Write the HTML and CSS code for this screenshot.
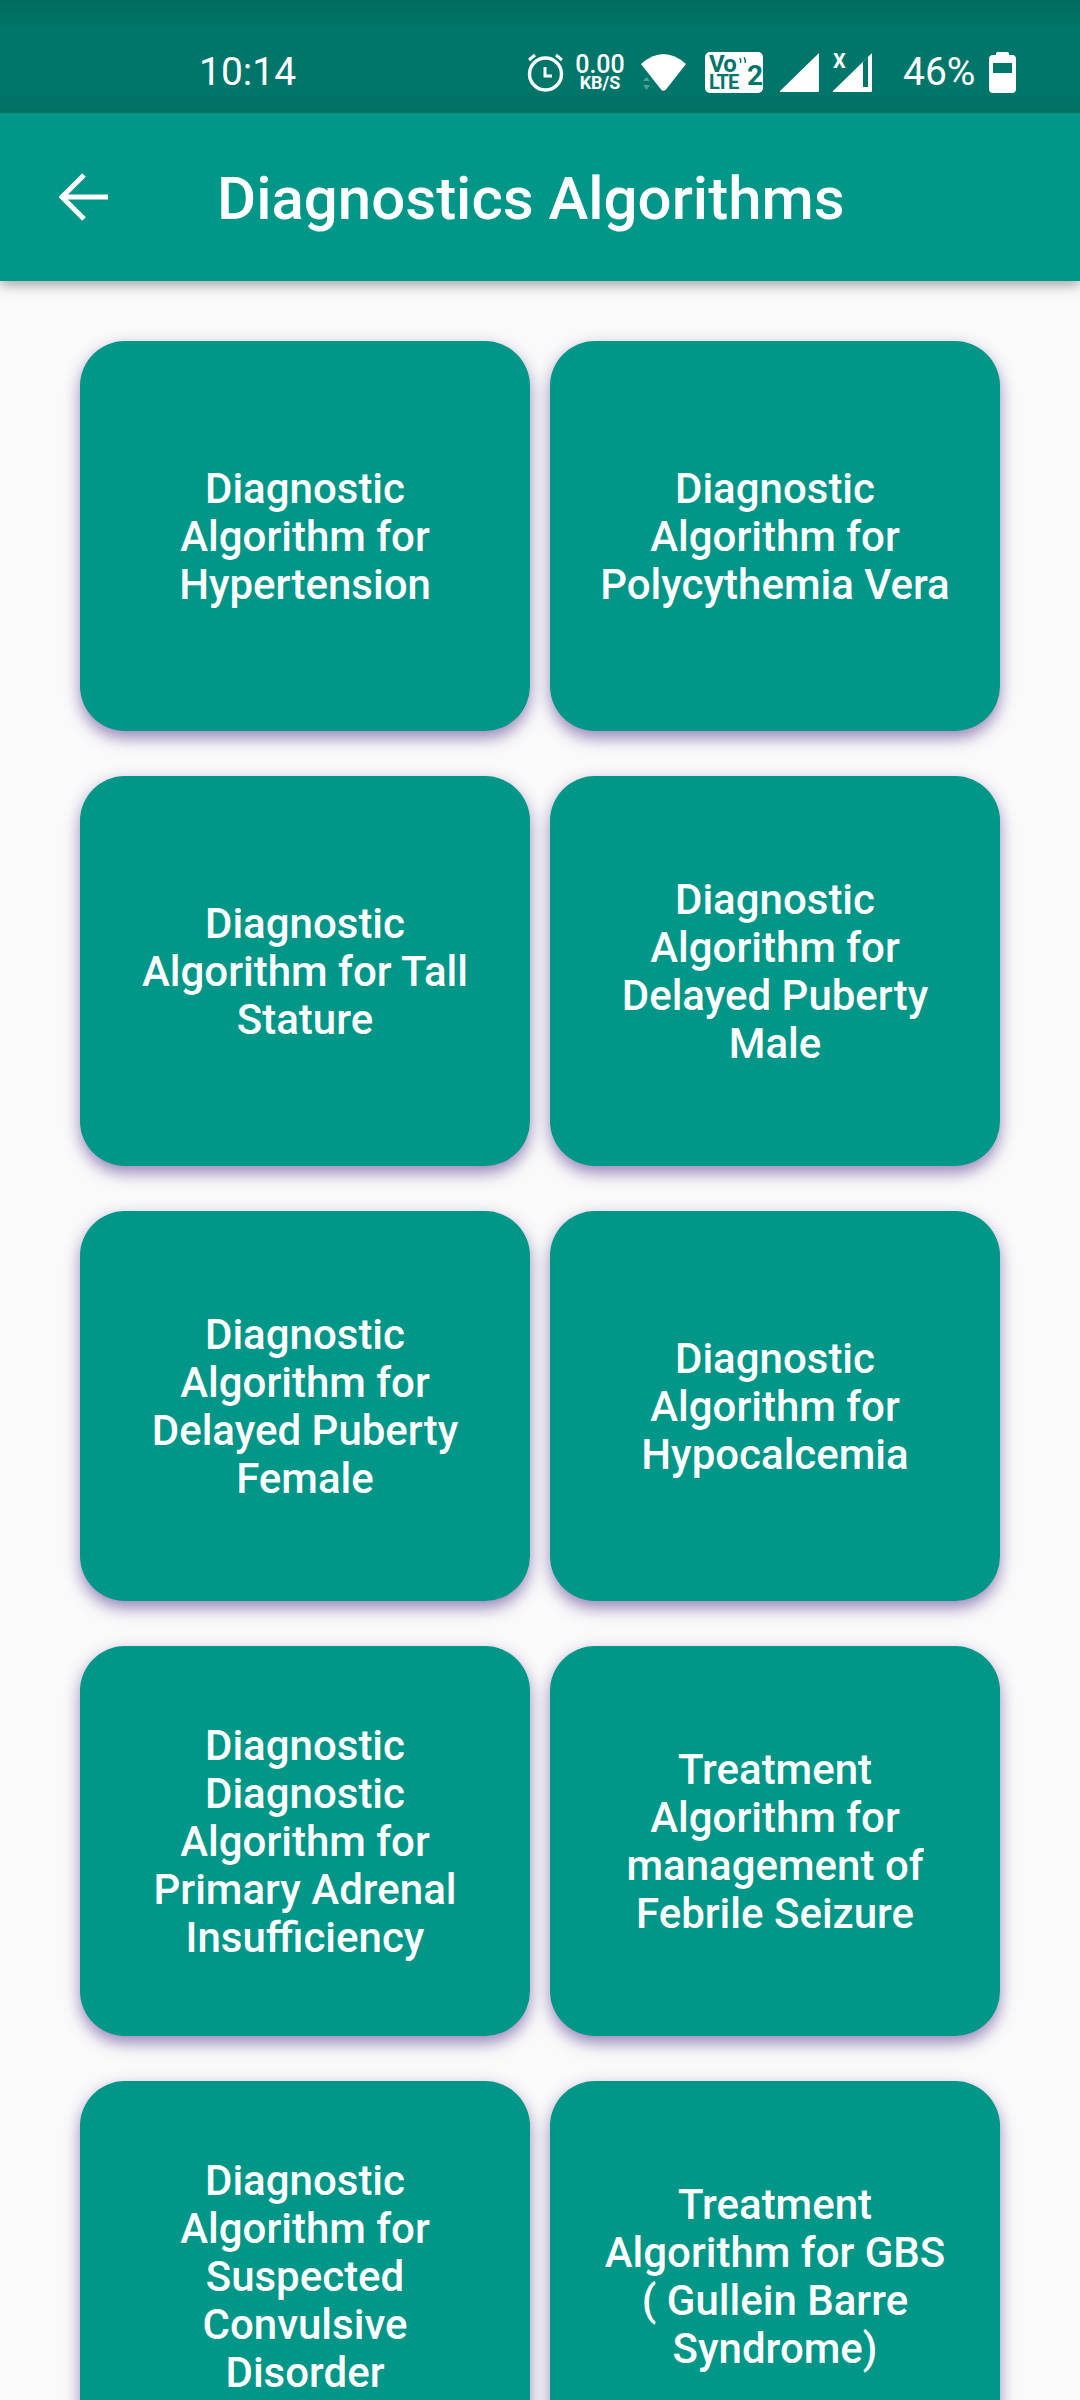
FILE: index.html
```html
<!DOCTYPE html>
<html lang="en">
<head>
<meta charset="utf-8">
<title>Diagnostics Algorithms</title>
<link rel="stylesheet" href="styles.css">
</head>
<body>
<div class="screen">
  <header class="top">
    <div class="status">
      <span class="time">10:14</span>
      <div class="status-icons">
        <svg class="i-alarm" width="37" height="39" viewBox="0 0 37 39"><circle cx="18.5" cy="21" r="16" fill="none" stroke="#fff" stroke-width="3.400"/><path d="M18 14v9h7" fill="none" stroke="#fff" stroke-width="3"/><path d="M2 7l6-5M35 7l-6-5" stroke="#fff" stroke-width="3"/></svg>
        <div class="speed"><span class="speed-n">0.00</span><span class="speed-u">KB/S</span></div>
        <svg class="i-wifi" width="45" height="37" viewBox="0 0 45 37"><path d="M0 10Q22.500 -10 45 10L25 35.500Q22.500 38 20 35.500Z" fill="#fff"/><path d="M2 27l3.500-4 3.500 4zM2 31l3.500 5 3.500-5z" fill="#fff" opacity=".3"/></svg>
        <div class="volte">
          <div class="volte-l">
            <div class="volte-vo"><span>Vo</span><svg class="volte-w" width="11" height="9" viewBox="0 0 11 9"><path d="M1 1q2.500 3 1 7M7 0q3 4 1.500 8" fill="none" stroke="#00766a" stroke-width="2"/></svg></div>
            <span class="volte-lte">LTE</span>
          </div>
          <span class="volte-n">2</span>
        </div>
        <svg class="i-sig1" width="40" height="40" viewBox="0 0 40 40"><path d="M40 1V38.500Q40 40 38.500 40H1.500Q0 40 1 39Z" fill="#fff"/></svg>
        <div class="sig2">
          <svg width="40" height="40" viewBox="0 0 40 40"><path d="M40 1V38.500Q40 40 38.500 40H1.500Q0 40 1 39ZM31 10 36 5V35H31Z" fill="#fff" fill-rule="evenodd"/></svg>
          <span class="sig-x">X</span>
        </div>
        <span class="batt-t">46%</span>
        <svg class="i-batt" width="27" height="41" viewBox="0 0 27 41"><path d="M7 3V1.500Q7 0 8.500 0H18.500Q20 0 20 1.500V3H23Q27 3 27 7V37Q27 41 23 41H4Q0 41 0 37V7Q0 3 4 3ZM4 11V21H23V11Z" fill="#fff" fill-rule="evenodd"/></svg>
      </div>
    </div>
    <div class="bar">
      <svg class="back" width="50" height="50" viewBox="0 0 50 50"><path d="M49 25H3M25 3 3 25l22 22" fill="none" stroke="#fff" stroke-width="5"/></svg>
      <h1 class="title">Diagnostics Algorithms</h1>
    </div>
  </header>
  <main class="grid">
    <a class="card">Diagnostic Algorithm for Hypertension</a>
    <a class="card">Diagnostic Algorithm for Polycythemia Vera</a>
    <a class="card">Diagnostic Algorithm for Tall Stature</a>
    <a class="card">Diagnostic Algorithm for Delayed Puberty Male</a>
    <a class="card">Diagnostic Algorithm for Delayed Puberty Female</a>
    <a class="card">Diagnostic Algorithm for Hypocalcemia</a>
    <a class="card">Diagnostic Diagnostic Algorithm for Primary Adrenal Insufficiency</a>
    <a class="card">Treatment Algorithm for management of Febrile Seizure</a>
    <a class="card">Diagnostic Algorithm for Suspected Convulsive Disorder</a>
    <a class="card">Treatment Algorithm for GBS ( Gullein Barre Syndrome)</a>
  </main>
</div>
</body>
</html>
```
FILE: styles.css
```css
html, body { margin: 0; padding: 0; }
body { width: 1080px; height: 2400px; overflow: hidden; font-family: Roboto, sans-serif; background: #fafafa; }
.screen { height: 2400px; overflow: hidden; }
.top { position: relative; z-index: 2; box-shadow: 0 4px 12px rgba(0,0,0,.35); }
.status { height: 113px; box-sizing: border-box; padding: 31px 0 0 199px; background: #00786b; background-image: linear-gradient(#006c60, #00766a 30%, #00766a 75%, #007064); display: flex; align-items: center; color: #fff; }
.time { font-size: 39px; width: 328px; flex: none; }
.status-icons { display: flex; align-items: center; }
.i-alarm { margin-right: 10px; flex: none; }
.speed { display: flex; flex-direction: column; align-items: center; width: 52px; margin-right: 15px; font-weight: 500; }
.speed-n { font-size: 25px; line-height: 21px; }
.speed-u { font-size: 18px; line-height: 15px; font-weight: 700; }
.i-wifi { margin-right: 19px; flex: none; }
.volte { width: 58px; height: 41px; background: #fff; border-radius: 5px; color: #00766a; display: flex; font-weight: 700; margin-right: 16px; box-sizing: border-box; padding: 2px 0 0 4px; }
.volte-l { display: flex; flex-direction: column; width: 38px; flex: none; }
.volte-vo { display: flex; font-size: 24px; line-height: 20px; letter-spacing: -.8px; }
.volte-w { margin: 2px 0 0 3px; }
.volte-lte { font-size: 20px; line-height: 17px; letter-spacing: -1px; }
.volte-n { font-size: 28px; line-height: 28px; margin-top: 8px; }
.i-sig1 { margin-right: 13px; flex: none; }
.sig2 { position: relative; width: 40px; height: 40px; margin-right: 31px; flex: none; }
.sig2 svg { display: block; }
.sig-x { position: absolute; left: 1px; top: -3px; font-size: 20px; line-height: 24px; font-weight: 700; }
.batt-t { font-size: 39px; margin-right: 14px; }
.i-batt { flex: none; }
.bar { height: 168px; background: #009688; display: flex; align-items: center; color: #fff; }
.back { margin-left: 59px; margin-right: 108px; flex: none; }
.title { margin: 0; font-size: 60px; font-weight: 500; line-height: 1; padding-top: 4px; }
.grid { display: grid; grid-template-columns: 450px 450px; column-gap: 20px; row-gap: 45px; padding: 60px 80px 0; }
.card { height: 390px; box-sizing: border-box; padding: 2px 45px 0; background: #009688; border-radius: 45px; display: flex; align-items: center; justify-content: center; text-align: center; color: #fff; font-size: 42px; font-weight: 500; line-height: 48px; box-shadow: 0 8px 16px -1px rgba(70,40,130,.5), 0 2px 16px rgba(90,60,160,.12); }
```
